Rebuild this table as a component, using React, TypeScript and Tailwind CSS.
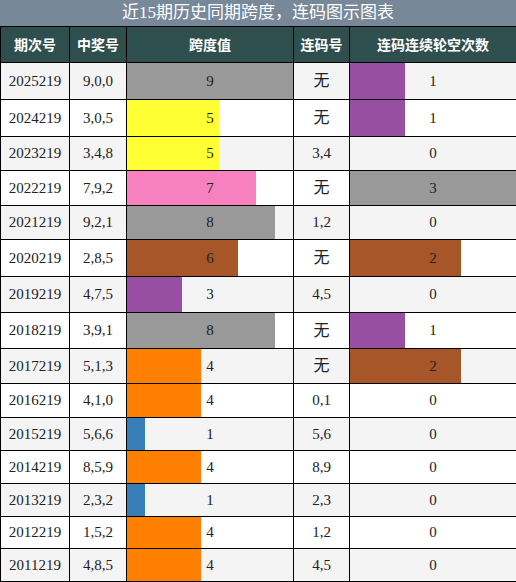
const rows = [
  { issue: "2025219", nums: "9,0,0", span: 9, pair: "无", gap: 1, h: "h-[37px]" },
  { issue: "2024219", nums: "3,0,5", span: 5, pair: "无", gap: 1, h: "h-[37px]" },
  { issue: "2023219", nums: "3,4,8", span: 5, pair: "3,4", gap: 0, h: "h-[34px]" },
  { issue: "2022219", nums: "7,9,2", span: 7, pair: "无", gap: 3, h: "h-[35px]" },
  { issue: "2021219", nums: "9,2,1", span: 8, pair: "1,2", gap: 0, h: "h-[34px]" },
  { issue: "2020219", nums: "2,8,5", span: 6, pair: "无", gap: 2, h: "h-[37px]" },
  { issue: "2019219", nums: "4,7,5", span: 3, pair: "4,5", gap: 0, h: "h-[36px]" },
  { issue: "2018219", nums: "3,9,1", span: 8, pair: "无", gap: 1, h: "h-[36px]" },
  { issue: "2017219", nums: "5,1,3", span: 4, pair: "无", gap: 2, h: "h-[35px]" },
  { issue: "2016219", nums: "4,1,0", span: 4, pair: "0,1", gap: 0, h: "h-[34px]" },
  { issue: "2015219", nums: "5,6,6", span: 1, pair: "5,6", gap: 0, h: "h-[33px]" },
  { issue: "2014219", nums: "8,5,9", span: 4, pair: "8,9", gap: 0, h: "h-[33px]" },
  { issue: "2013219", nums: "2,3,2", span: 1, pair: "2,3", gap: 0, h: "h-[33px]" },
  { issue: "2012219", nums: "1,5,2", span: 4, pair: "1,2", gap: 0, h: "h-[32px]" },
  { issue: "2011219", nums: "4,8,5", span: 4, pair: "4,5", gap: 0, h: "h-[33px]" },
];

// colorbrewer Set1 style palette
const spanColors: Record<number, string> = {
  1: "#377eb8",
  3: "#984ea3",
  4: "#ff7f00",
  5: "#ffff33",
  6: "#a65628",
  7: "#f781bf",
  8: "#999999",
  9: "#999999",
};

const gapColors: Record<number, string> = {
  1: "#984ea3",
  2: "#a65628",
  3: "#999999",
};

const cols = "grid grid-cols-[69px_57px_167px_56px_166px]";
const font = { fontFamily: '"Liberation Serif", "Noto Sans CJK SC", serif' };

const BarCell = ({ value, max, color, border }: { value: number; max: number; color?: string; border: boolean }) => (
  <div className={`relative h-full ${border ? "border-r border-black" : ""}`}>
    {value > 0 && color && (
      <div className="absolute left-0 top-0 h-full" style={{ width: `${(value / max) * 100}%`, background: color }} />
    )}
    <span className="relative flex h-full items-center justify-center text-[15px] text-[#222]">{value}</span>
  </div>
);

export default function App() {
  return (
    <div className="w-[516px] bg-white" style={font}>
      <div className="flex h-[26px] items-center justify-center bg-[#778899] text-[17px] text-white">
        近15期历史同期跨度，连码图示图表
      </div>
      <div
        className={`${cols} h-[37px] border-y border-l border-black bg-[#2f4f4f] text-[14px] font-bold text-white`}
        style={{ fontFamily: '"Noto Sans CJK SC", sans-serif' }}
      >
        <div className="flex items-center justify-center border-r border-black">期次号</div>
        <div className="flex items-center justify-center border-r border-black">中奖号</div>
        <div className="flex items-center justify-center border-r border-black">跨度值</div>
        <div className="flex items-center justify-center border-r border-black">连码号</div>
        <div className="flex items-center justify-center">连码连续轮空次数</div>
      </div>
      {rows.map((r, i) => (
        <div
          key={r.issue}
          className={`${cols} ${r.h} border-b border-l border-black text-[15px] text-[#222] ${
            i % 2 === 0 ? "bg-[#f4f4f4]" : "bg-white"
          }`}
        >
          <div className="flex items-center justify-center border-r border-black">{r.issue}</div>
          <div className="flex items-center justify-center border-r border-black">{r.nums}</div>
          <BarCell value={r.span} max={9} color={spanColors[r.span]} border />
          <div className={`flex items-center justify-center border-r border-black ${r.pair === "无" ? "text-[16px]" : ""}`}>
            {r.pair}
          </div>
          <BarCell value={r.gap} max={3} color={gapColors[r.gap]} border={false} />
        </div>
      ))}
    </div>
  );
}
